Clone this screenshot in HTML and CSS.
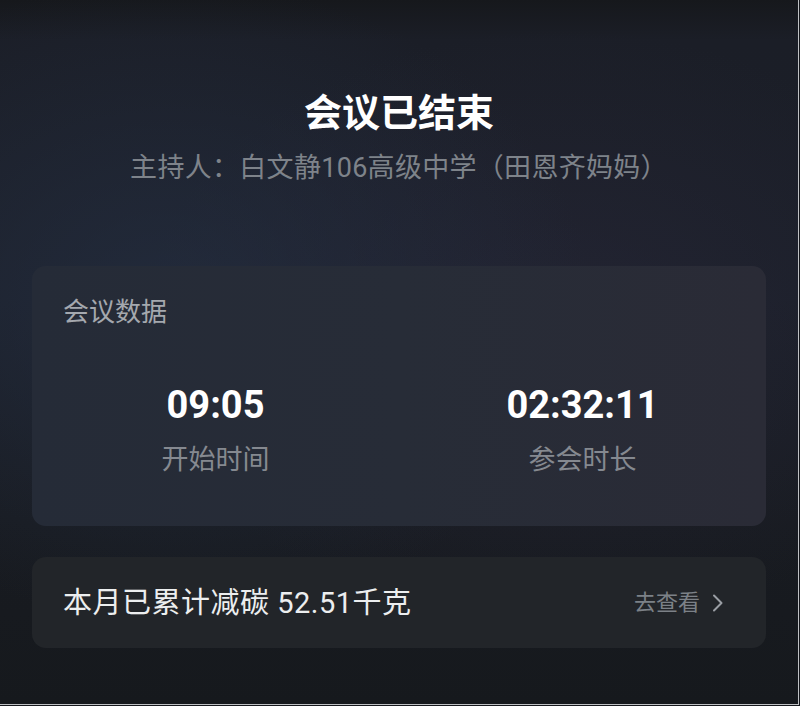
FILE: index.html
```html
<!DOCTYPE html>
<html lang="zh-CN">
<head>
  <meta charset="UTF-8" />
  <meta name="viewport" content="width=device-width, initial-scale=1.0"/>
  <title>会议已结束</title>
  <link rel="stylesheet" href="styles.css">
</head>
<body>
  <div class="page">
    <!-- 标题 -->
    <div class="header">
      <h1 class="title">会议已结束</h1>
      <p class="host">主持人：白文静106高级中学（田恩齐妈妈）</p>
    </div>

    <!-- 会议数据 -->
    <div class="card stats-card">
      <div class="card-title">会议数据</div>
      <div class="stats">
        <div class="stat">
          <div class="stat-value">09:05</div>
          <div class="stat-label">开始时间</div>
        </div>
        <div class="stat">
          <div class="stat-value">02:32:11</div>
          <div class="stat-label">参会时长</div>
        </div>
      </div>
    </div>

    <!-- 减碳 -->
    <div class="card carbon-card">
      <span class="carbon-text">本月已累计减碳 52.51千克</span>
      <a class="carbon-link" href="#">
        去查看
        <svg class="chevron" width="12" height="18" viewBox="0 0 12 18">
          <path d="M2 1.5 L9.5 9 L2 16.5" fill="none" stroke="#9a9ea4" stroke-width="2" stroke-linecap="round" stroke-linejoin="round"/>
        </svg>
      </a>
    </div>
  </div>
</body>
</html>
```

FILE: styles.css
```css
body {
  margin: 0;
  font-family: Roboto, "Noto Sans CJK SC", sans-serif;
  background: #16181d;
}

.page {
  width: 799px;
  height: 705px;
  box-sizing: border-box;
  padding: 90px 32px 0 32px;
  border-right: 1px solid #bfc1c4;
  border-bottom: 1px solid #bfc1c4;
  background:
    radial-gradient(ellipse 420px 320px at 170px 300px, rgba(40, 52, 74, 0.55), rgba(40, 52, 74, 0) 100%),
    radial-gradient(ellipse 420px 300px at 560px 330px, rgba(44, 42, 62, 0.45), rgba(44, 42, 62, 0) 100%),
    linear-gradient(180deg, #16181c 0px, #1b1e27 40px, #1b1f29 300px, #181b21 520px, #16191d 706px);
}

.header {
  text-align: center;
}

.title {
  margin: 0;
  font-size: 38px;
  line-height: 46px;
  font-weight: bold;
  color: #ffffff;
}

.host {
  margin: 14px 0 0;
  font-size: 27px;
  line-height: 36px;
  letter-spacing: 0.3px;
  color: #7e838a;
}

.card {
  border-radius: 14px;
}

.stats-card {
  margin-top: 80px;
  height: 260px;
  box-sizing: border-box;
  padding-top: 28px;
  background: linear-gradient(90deg, #252b37 0%, #272c37 50%, #2a2b36 100%);
}

.card-title {
  padding-left: 31px;
  font-size: 26px;
  line-height: 36px;
  color: #a4a8ae;
}

.stats {
  display: grid;
  grid-template-columns: 1fr 1fr;
  margin-top: 51px;
}

.stat {
  text-align: center;
}

.stat-value {
  font-size: 38px;
  line-height: 48px;
  font-weight: bold;
  color: #ffffff;
}

.stat-label {
  margin-top: 13px;
  font-size: 27px;
  line-height: 36px;
  color: #858990;
}

.carbon-card {
  margin-top: 31px;
  height: 91px;
  box-sizing: border-box;
  padding: 0 42px 0 31px;
  display: flex;
  align-items: center;
  justify-content: space-between;
  background: #222529;
}

.carbon-text {
  font-size: 29px;
  line-height: 38px;
  letter-spacing: 0.5px;
  color: #eceeef;
}

.carbon-link {
  display: flex;
  align-items: center;
  gap: 12px;
  font-size: 22px;
  line-height: 30px;
  color: #7c8187;
  text-decoration: none;
}

.chevron {
  display: block;
}
```
